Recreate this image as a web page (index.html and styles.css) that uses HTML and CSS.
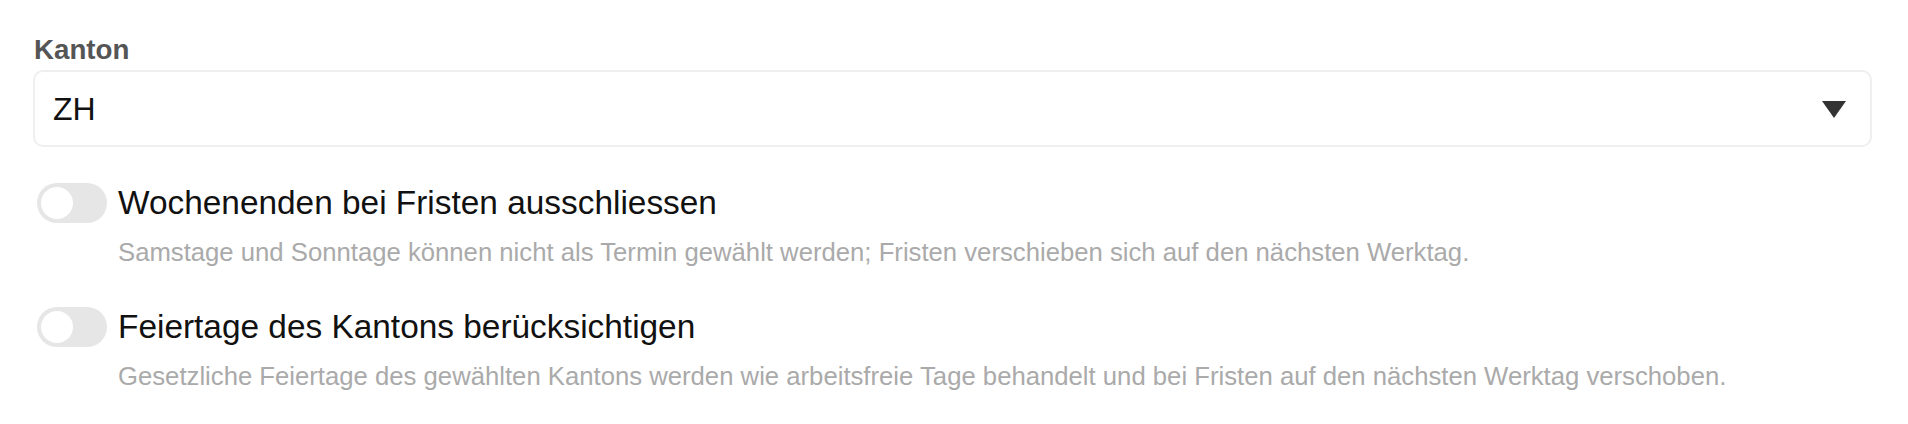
FILE: index.html
```html
<!DOCTYPE html>
<html lang="de">
<head>
<meta charset="utf-8">
<title>Kanton Einstellungen</title>
<link rel="stylesheet" href="styles.css">
</head>
<body>
<div class="settings">
  <label class="field-label" for="kanton">Kanton</label>
  <div class="select">
    <span class="select-value">ZH</span>
    <svg class="select-arrow" width="24" height="17" viewBox="0 0 24 17" aria-hidden="true"><path d="M0 0 H24 L12 17 Z" fill="#333"/></svg>
  </div>

  <div class="option option-first">
    <div class="toggle-row">
      <span class="toggle"><span class="knob"></span></span>
      <span class="toggle-label">Wochenenden bei Fristen ausschliessen</span>
    </div>
    <p class="hint">Samstage und Sonntage können nicht als Termin gewählt werden; Fristen verschieben sich auf den nächsten Werktag.</p>
  </div>

  <div class="option option-second">
    <div class="toggle-row">
      <span class="toggle"><span class="knob"></span></span>
      <span class="toggle-label">Feiertage des Kantons berücksichtigen</span>
    </div>
    <p class="hint">Gesetzliche Feiertage des gewählten Kantons werden wie arbeitsfreie Tage behandelt und bei Fristen auf den nächsten Werktag verschoben.</p>
  </div>
</div>
</body>
</html>
```

FILE: styles.css
```css
html, body {
  margin: 0;
  padding: 0;
  background: #ffffff;
}

body {
  font-family: "Liberation Sans", Arial, Helvetica, sans-serif;
  color: #111111;
}

.settings {
  padding: 34px 36px 0 33px;
  display: flex;
  flex-direction: column;
}

.field-label {
  display: block;
  font-size: 27.7px;
  line-height: 31px;
  font-weight: bold;
  color: #555555;
  margin-left: 1px;
}

.select {
  margin-top: 5px;
  height: 77px;
  box-sizing: border-box;
  border: 2px solid #efefef;
  border-radius: 10px;
  display: flex;
  align-items: center;
  justify-content: space-between;
  padding: 0 24px 0 18px;
}

.select-value {
  font-size: 32px;
  line-height: 40px;
  color: #111111;
}

.select-arrow {
  display: block;
  margin-top: 2px;
}

.option-first {
  margin-top: 36px;
}

.option-second {
  margin-top: 40px;
}

.toggle-row {
  display: flex;
  align-items: center;
  gap: 11px;
  margin-left: 4px;
}

.toggle {
  width: 70px;
  height: 40px;
  border-radius: 20px;
  background: #e6e6e6;
  box-sizing: border-box;
  padding: 4px;
  flex: none;
  display: flex;
  align-items: center;
}

.knob {
  width: 32px;
  height: 32px;
  border-radius: 50%;
  background: #ffffff;
}

.toggle-label {
  font-size: 33.4px;
  line-height: 40px;
  color: #111111;
}

.hint {
  margin: 14px 0 0 85px;
  font-size: 25.7px;
  line-height: 30px;
  color: #aaaaaa;
}
```
